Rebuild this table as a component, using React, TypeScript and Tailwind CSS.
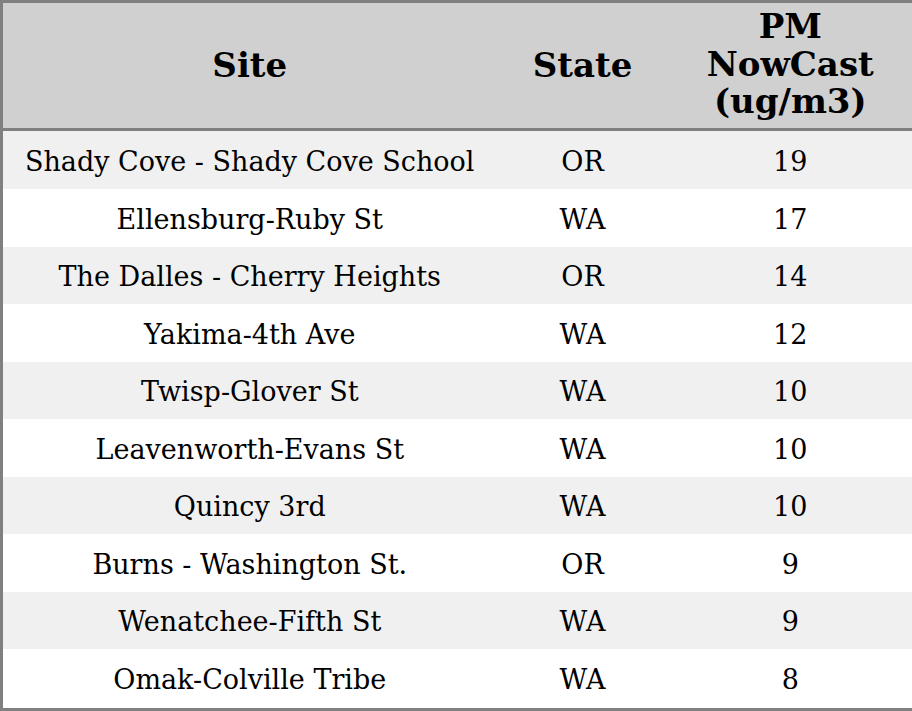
import React from "react";

const rows: [string, string, string][] = [
  ["Shady Cove - Shady Cove School", "OR", "19"],
  ["Ellensburg-Ruby St", "WA", "17"],
  ["The Dalles - Cherry Heights", "OR", "14"],
  ["Yakima-4th Ave", "WA", "12"],
  ["Twisp-Glover St", "WA", "10"],
  ["Leavenworth-Evans St", "WA", "10"],
  ["Quincy 3rd", "WA", "10"],
  ["Burns - Washington St.", "OR", "9"],
  ["Wenatchee-Fifth St", "WA", "9"],
  ["Omak-Colville Tribe", "WA", "8"],
];

export default function App() {
  return (
    <div
      className="w-[912px] h-[711px] bg-white text-black"
      style={{ fontFamily: '"DejaVu Serif", serif' }}
    >
      <table className="w-[912px] h-[711px] border-collapse border-[3px] border-[#808080] table-fixed">
        <colgroup>
          <col className="w-[495px]" />
          <col className="w-[172px]" />
          <col className="w-[245px]" />
        </colgroup>
        <thead>
          <tr className="h-[128px] bg-[#d0d0d0] border-b-[3px] border-[#808080]">
            <th className="text-[34px] font-bold leading-[37.5px] text-center align-middle p-0">Site</th>
            <th className="text-[34px] font-bold leading-[37.5px] text-center align-middle p-0">State</th>
            <th className="text-[34px] font-bold leading-[37.5px] text-center align-middle p-0 pb-[2px]">
              PM
              <br />
              NowCast
              <br />
              (ug/m3)
            </th>
          </tr>
        </thead>
        <tbody>
          {rows.map((r, i) => (
            <tr key={i} className={i % 2 === 0 ? "bg-[#f0f0f0]" : "bg-white"}>
              <td className="text-[27px] leading-[32px] text-center align-middle p-0 pt-[3px]">{r[0]}</td>
              <td className="text-[27px] leading-[32px] text-center align-middle p-0 pt-[3px]">{r[1]}</td>
              <td className="text-[27px] leading-[32px] text-center align-middle p-0 pt-[3px]">{r[2]}</td>
            </tr>
          ))}
        </tbody>
      </table>
    </div>
  );
}
